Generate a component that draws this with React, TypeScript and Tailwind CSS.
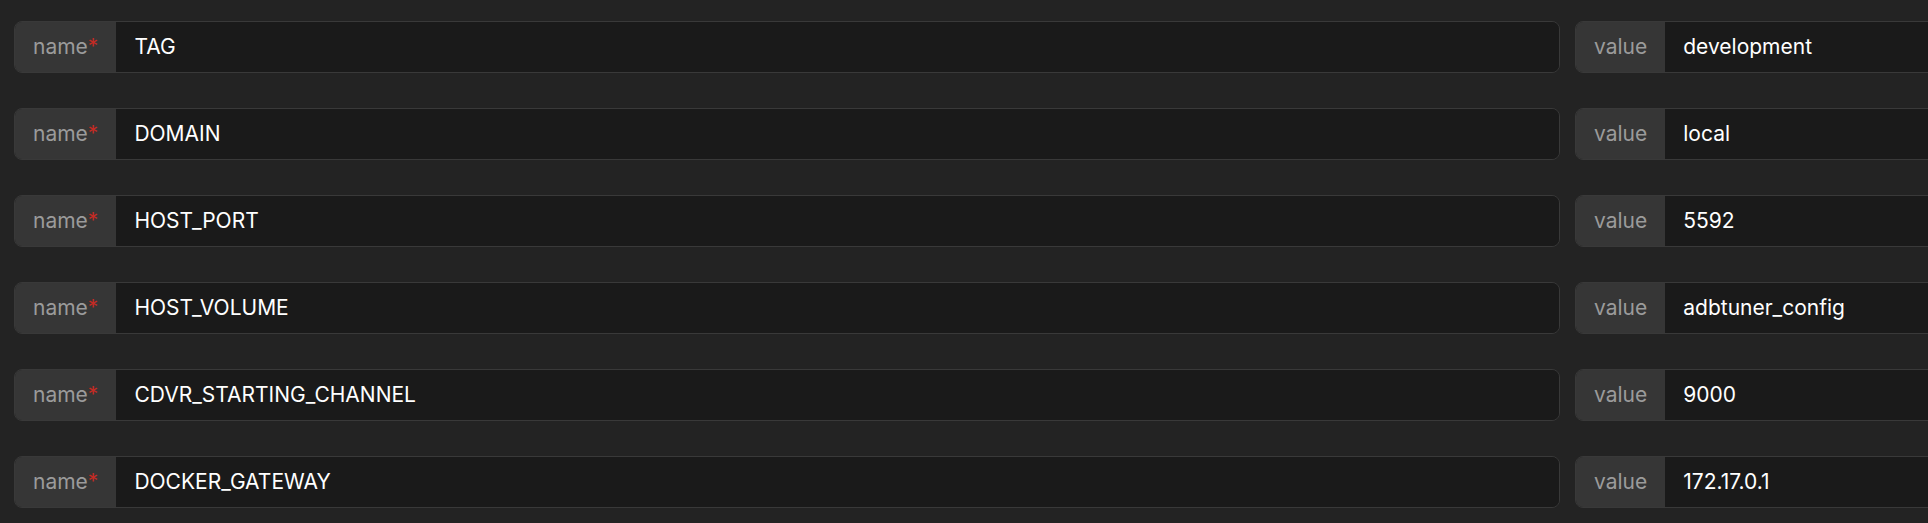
const rows = [
  { name: 'TAG', value: 'development' },
  { name: 'DOMAIN', value: 'local' },
  { name: 'HOST_PORT', value: '5592' },
  { name: 'HOST_VOLUME', value: 'adbtuner_config' },
  { name: 'CDVR_STARTING_CHANNEL', value: '9000' },
  { name: 'DOCKER_GATEWAY', value: '172.17.0.1' },
];

function Field({ label, text, required, className }: { label: string; text: string; required?: boolean; className: string }) {
  return (
    <div className={`flex h-[52px] shrink-0 overflow-hidden rounded-lg border border-[#393939] ${className}`}>
      <div className="flex items-center bg-[#363636] px-[18px] text-[21px] text-[#9b9b9b]">
        {label}
        {required && <span className="text-[#c42b24]">*</span>}
      </div>
      <div className="flex flex-1 items-center bg-[#1a1a1a] px-[18px] text-[21px] text-white">{text}</div>
    </div>
  );
}

export default function App() {
  return (
    <div className="h-[523px] w-[1928px] overflow-hidden bg-[#232323] pt-[21px] pl-[14px]" style={{ fontFamily: 'Inter, "Noto Sans", sans-serif' }}>
      <div className="flex flex-col gap-[35px]">
        {rows.map((r) => (
          <div key={r.name} className="flex gap-[15px]">
            <Field label="name" text={r.name} required className="w-[1546px]" />
            <Field label="value" text={r.value} className="w-[600px]" />
          </div>
        ))}
      </div>
    </div>
  );
}
